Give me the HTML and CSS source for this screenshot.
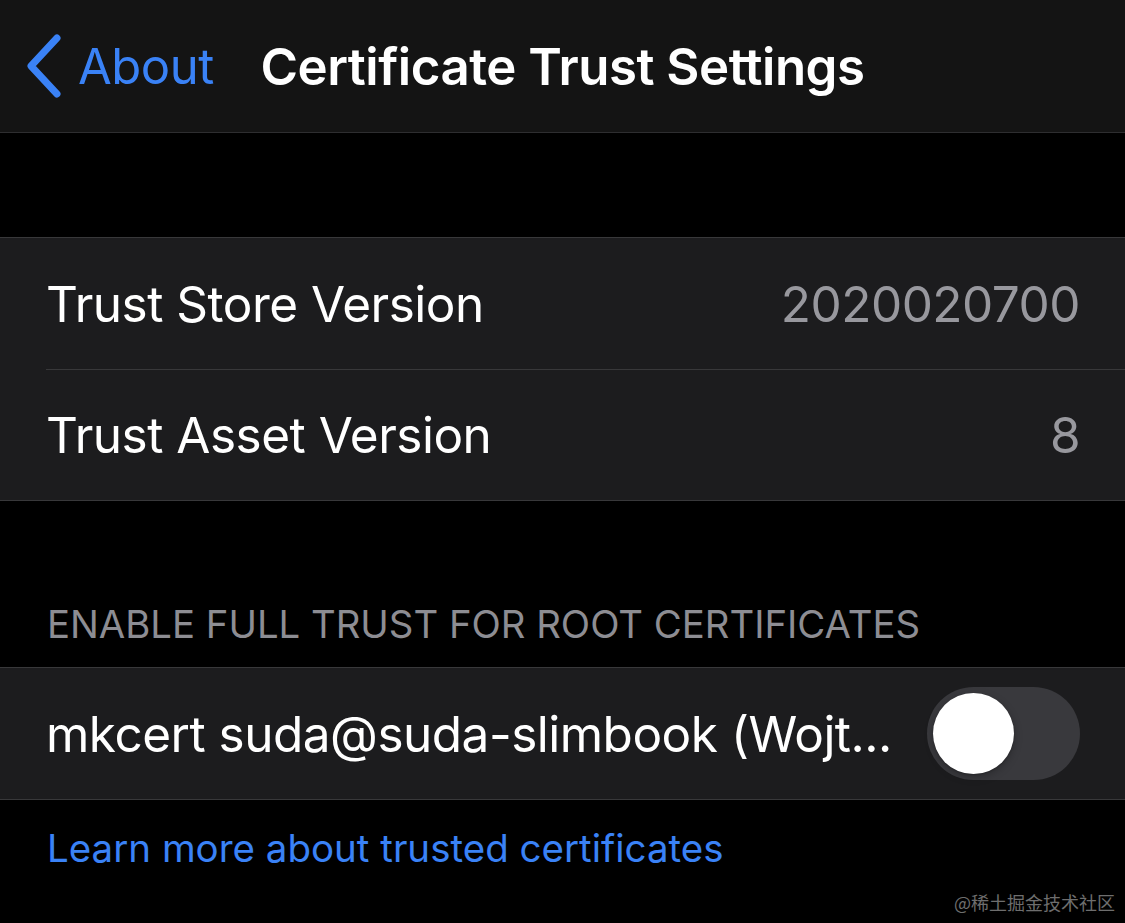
FILE: index.html
```html
<!DOCTYPE html>
<html lang="en">
<head>
<meta charset="utf-8">
<title>Certificate Trust Settings</title>
<link rel="stylesheet" href="styles.css">
</head>
<body>
<div class="screen">
  <header class="nav">
    <a class="back" href="#">
      <svg class="chevron" width="40" height="66" viewBox="0 0 40 66" aria-hidden="true">
        <path d="M33 5 L7 33 L33 61" fill="none" stroke="#3a82f6" stroke-width="7" stroke-linecap="round" stroke-linejoin="round"/>
      </svg>
      <span>About</span>
    </a>
    <h1 class="title">Certificate Trust Settings</h1>
    <div></div>
  </header>

  <div class="gap-top"></div>

  <section class="group">
    <div class="row">
      <span class="label">Trust Store Version</span>
      <span class="value">2020020700</span>
    </div>
    <div class="row">
      <span class="label">Trust Asset Version</span>
      <span class="value">8</span>
    </div>
  </section>

  <div class="section-header">ENABLE FULL TRUST FOR ROOT CERTIFICATES</div>

  <section class="group">
    <div class="row">
      <span class="label truncate">mkcert suda@suda-slimbook (Wojt...</span>
      <span class="toggle"><span class="knob"></span></span>
    </div>
  </section>

  <div class="footer"><a href="#" class="link">Learn more about trusted certificates</a></div>

  <div class="watermark">@稀土掘金技术社区</div>
</div>
</body>
</html>
```

FILE: styles.css
```css
* { box-sizing: border-box; }
html, body {
  margin: 0;
  padding: 0;
  background: #000;
}
body {
  font-family: Inter, "Noto Sans", sans-serif;
  color: #fff;
}
.screen {
  position: relative;
  width: 1125px;
  height: 923px;
  overflow: hidden;
  background: #000;
}
.nav {
  height: 133px;
  background: #141414;
  border-bottom: 1px solid #2e2e30;
  display: grid;
  grid-template-columns: 1fr auto 1fr;
  align-items: center;
}
.back {
  display: flex;
  align-items: center;
  padding-left: 24px;
  color: #3a82f6;
  text-decoration: none;
  font-size: 49px;
  letter-spacing: -0.5px;
}
.chevron { margin-right: 14px; }
.title {
  margin: 0;
  font-size: 51px;
  font-weight: 600;
  letter-spacing: -0.5px;
  color: #fff;
}
.gap-top { height: 104px; }
.group {
  background: #1c1c1e;
  border-top: 1px solid #38383a;
  border-bottom: 1px solid #38383a;
}
.row {
  height: 131px;
  margin-left: 46px;
  padding-right: 45px;
  display: flex;
  align-items: center;
  justify-content: space-between;
  font-size: 49.5px;
  letter-spacing: -0.5px;
}
.row + .row { border-top: 1px solid #38383a; }
.value { color: #98989e; }
.section-header {
  height: 166px;
  display: flex;
  align-items: flex-end;
  padding: 0 0 20px 47px;
  font-size: 38.3px;
  color: #8d8d93;
  letter-spacing: 0;
}
.toggle {
  position: relative;
  width: 153px;
  height: 93px;
  border-radius: 47px;
  background: #39393d;
  flex: none;
}
.knob {
  position: absolute;
  left: 6px;
  top: 6px;
  width: 81px;
  height: 81px;
  border-radius: 50%;
  background: #fff;
  box-shadow: 0 3px 8px rgba(0,0,0,0.25), 0 1px 2px rgba(0,0,0,0.2);
}
.footer {
  padding: 25px 0 0 47px;
}
.link {
  color: #3a82f6;
  text-decoration: none;
  font-size: 38.5px;
}
.watermark {
  position: absolute;
  right: 10px;
  bottom: 8px;
  font-family: "Noto Sans CJK SC", sans-serif;
  font-size: 18px;
  color: #6e6e6e;
}
```
